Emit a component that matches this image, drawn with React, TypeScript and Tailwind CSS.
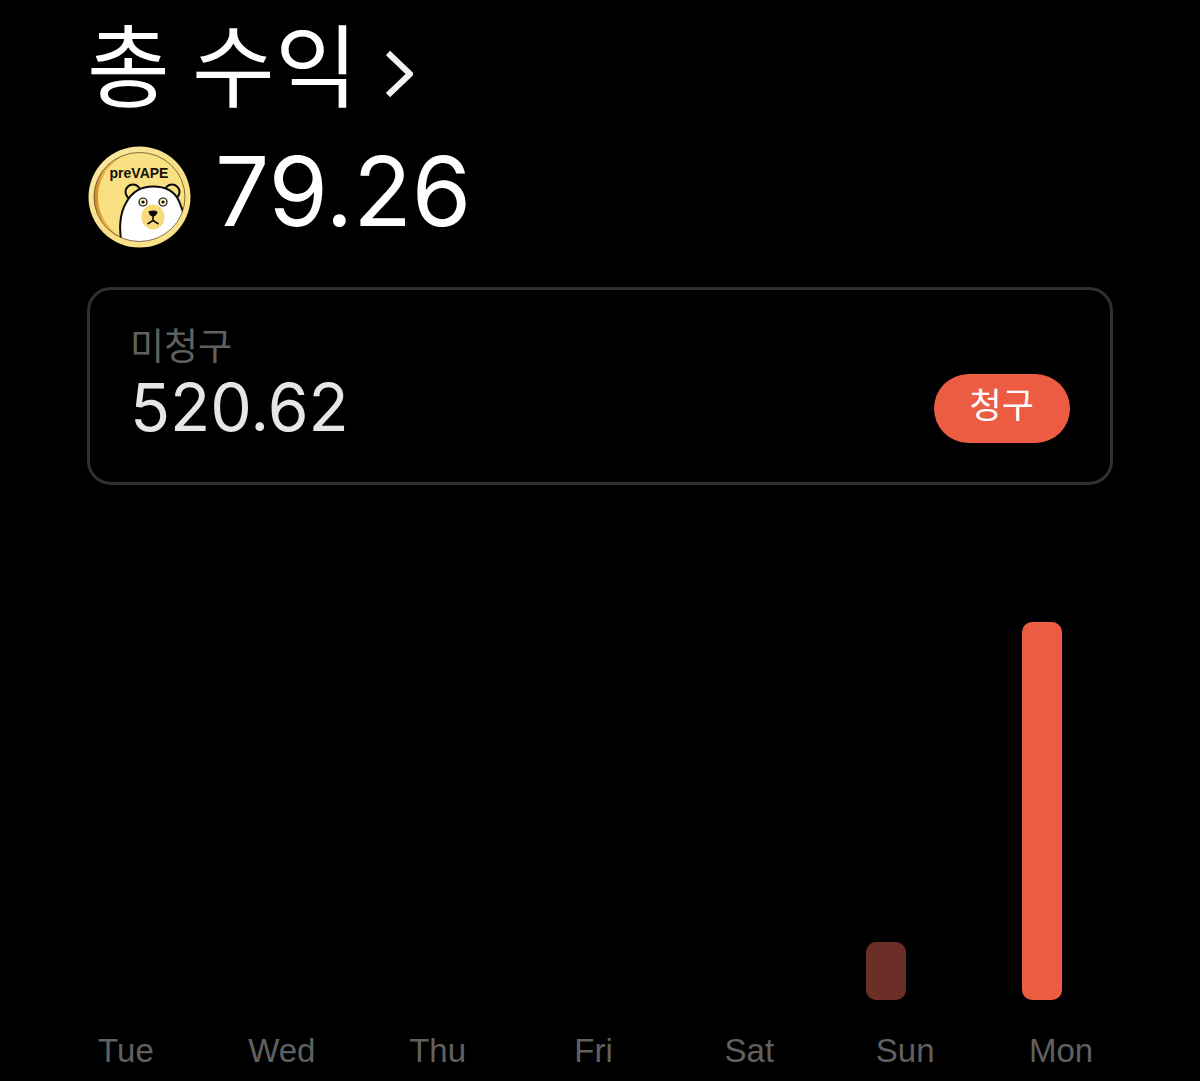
const days = [
  { label: "Tue", value: 0 },
  { label: "Wed", value: 0 },
  { label: "Thu", value: 0 },
  { label: "Fri", value: 0 },
  { label: "Sat", value: 0 },
  { label: "Sun", value: 58 },
  { label: "Mon", value: 378 },
];

function Coin() {
  return (
    <svg viewBox="0 0 104 102" className="h-[102px] w-[104px] shrink-0" role="img" aria-label="preVAPE">
      <defs>
        <linearGradient id="rim" x1="0" y1="0" x2="1" y2="0">
          <stop offset="0" stopColor="#c98a2c" />
          <stop offset="0.12" stopColor="#eeb044" />
          <stop offset="0.4" stopColor="#f0c455" />
          <stop offset="1" stopColor="#e8c766" />
        </linearGradient>
        <linearGradient id="edge" x1="0" y1="0" x2="1" y2="1">
          <stop offset="0" stopColor="#fbeaa6" />
          <stop offset="0.5" stopColor="#f8df85" />
          <stop offset="1" stopColor="#fbe38b" />
        </linearGradient>
        <clipPath id="face">
          <ellipse cx="52.5" cy="51" rx="45.5" ry="44.5" />
        </clipPath>
      </defs>
      <ellipse cx="52.5" cy="51" rx="51" ry="50.5" fill="url(#edge)" />
      <ellipse cx="52.5" cy="51" rx="45.5" ry="44.5" fill="url(#rim)" />
      <g clipPath="url(#face)">
        <ellipse cx="57" cy="51" rx="46" ry="46" fill="#f8e083" />
        <g stroke="#0b0b0b" strokeWidth="2">
          <circle cx="46" cy="46" r="7.5" fill="#f8e083" />
          <circle cx="85" cy="46" r="7.5" fill="#f8e083" />
          <path d="M37 104 C31 88 32 68 39.5 56 C45 46 53 40.5 66 40.5 C79 40.5 88 46 92 55 C96 65 99 72 100 82 L96 104 Z" fill="#fff" />
        </g>
        <ellipse cx="66" cy="71" rx="11.5" ry="12.5" fill="#f7da79" />
        <g fill="#fdf3c4" stroke="#0b0b0b" strokeWidth="1.2">
          <circle cx="56" cy="56" r="4" />
          <circle cx="76" cy="56" r="4" />
        </g>
        <circle cx="56" cy="56" r="1.6" fill="#0b0b0b" />
        <circle cx="76" cy="56" r="1.6" fill="#0b0b0b" />
        <path d="M61.5 66 Q61.5 64.5 66 64.5 Q70.5 64.5 70.5 66.5 Q69 70.5 66 70.5 Q63 70.5 61.5 66Z" fill="#0b0b0b" />
        <path d="M66 69 V74.5 L60.5 78 M66 74.5 L71.5 78" fill="none" stroke="#0b0b0b" strokeWidth="1.6" />
      </g>
      <ellipse cx="52.5" cy="51" rx="45.5" ry="44.5" fill="none" stroke="#4e3c1a" strokeWidth="0.7" />
      <text x="52" y="32" textAnchor="middle" fontSize="14" fontWeight="700" fontFamily="Liberation Sans, sans-serif" fill="#17120a">
        preVAPE
      </text>
    </svg>
  );
}

export default function App() {
  return (
    <main className="min-h-screen bg-black pb-1 font-['Inter','Noto_Sans_CJK_KR',sans-serif] text-white">
      <header className="px-[87px] pt-[18px]">
        <h1>
          <a href="#earnings" className="flex items-center font-['Roboto','Noto_Sans_CJK_KR',sans-serif] text-[90px] leading-[104px]">
            총 수익
            <svg viewBox="0 0 28 48" className="ml-7 mt-2 h-12 w-7" fill="none" stroke="#f2f2f2" strokeWidth="6" strokeLinejoin="round" aria-hidden="true">
              <path d="M2 3 L24 24 L2 45" />
            </svg>
          </a>
        </h1>
        <div className="mt-6 flex items-center gap-6">
          <Coin />
          <p className="-mt-3 text-[96px] leading-[88px]">79.26</p>
        </div>
      </header>

      <section className="mx-[87px] mt-[39px] flex items-end justify-between rounded-3xl border-[3px] border-[#303030] pt-[31px] pr-10 pb-[39px] pl-10">
        <div>
          <p className="font-['Noto_Sans_CJK_KR',sans-serif] text-[37px] leading-[46px] text-[#606060]">미청구</p>
          <p className="-mb-1 text-[66px] leading-20 text-[#e6e6e6]">520.62</p>
        </div>
        <button type="button" className="h-[69px] rounded-full bg-[#eb5c43] px-9 pb-3 font-['Noto_Sans_CJK_KR',sans-serif] text-[35px] leading-[56px] text-white">
          청구
        </button>
      </section>

      <section aria-label="수익" className="mt-[137px]">
        <div className="ml-7 mr-20 grid h-[378px] grid-cols-7 items-end justify-items-center">
          {days.map((day, i) => (
            <div
              key={day.label}
              className={`w-10 rounded-[10px] ${i === days.length - 1 ? "bg-[#eb5c43]" : "bg-[#6c2f27]"}`}
              style={{ height: day.value }}
            />
          ))}
        </div>
        <div className="ml-12 mr-[61px] mt-[31px] grid grid-cols-7 text-center font-['Liberation_Sans',sans-serif] text-[33px] leading-10 text-[#606060]">
          {days.map((day) => (
            <span key={day.label}>{day.label}</span>
          ))}
        </div>
      </section>
    </main>
  );
}
